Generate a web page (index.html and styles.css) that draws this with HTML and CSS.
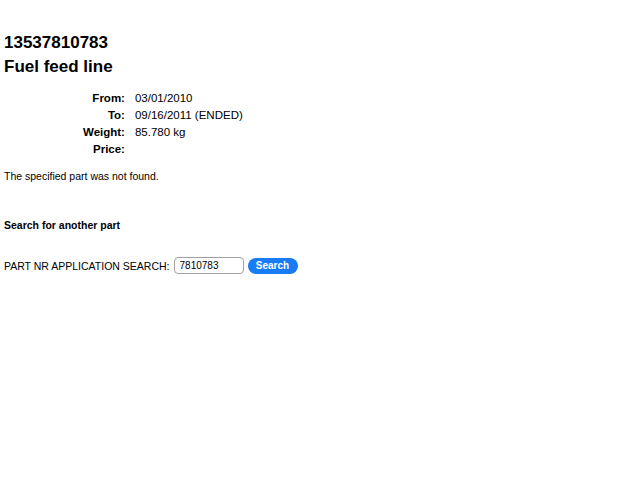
FILE: index.html
```html
<!DOCTYPE html>
<html lang="en">
<head>
    <meta charset="UTF-8">
    <meta name="viewport" content="width=device-width, initial-scale=1.0">
    <title>13537810783 - Fuel feed line</title>
    <link rel="stylesheet" href="styles.css">
</head>
<body>
    <div class="page">
        <h1 class="part-number">13537810783</h1>
        <h2 class="part-name">Fuel feed line</h2>

        <table class="details">
            <tr>
                <th>From:</th>
                <td>03/01/2010</td>
            </tr>
            <tr>
                <th>To:</th>
                <td>09/16/2011 (ENDED)</td>
            </tr>
            <tr>
                <th>Weight:</th>
                <td>85.780 kg</td>
            </tr>
            <tr>
                <th>Price:</th>
                <td></td>
            </tr>
        </table>

        <p class="not-found">The specified part was not found.</p>

        <h3 class="search-title">Search for another part</h3>

        <form class="search-form">
            <label for="partnr">PART NR APPLICATION SEARCH:</label>
            <input type="text" id="partnr" name="partnr" value="7810783">
            <button type="submit">Search</button>
        </form>
    </div>
</body>
</html>
```

FILE: styles.css
```css
body {
    font-family: "Liberation Sans", Arial, sans-serif;
    color: #000;
    background-color: #fff;
    margin: 0;
    padding: 0;
}

.page {
    padding: 33px 4px 0;
}

.part-number {
    font-size: 17px;
    font-weight: bold;
    margin: 0;
    line-height: 20px;
}

.part-name {
    font-size: 17px;
    font-weight: bold;
    margin: 4px 0 0;
    line-height: 20px;
}

.details {
    margin: 13px 0 0 79px;
    border-collapse: collapse;
    font-size: 11.5px;
}

.details th,
.details td {
    padding: 0;
    height: 17px;
    line-height: 17px;
}

.details th {
    text-align: right;
    font-weight: bold;
    padding-right: 10px;
}

.details td {
    text-align: left;
}

.not-found {
    font-size: 10.5px;
    line-height: 13px;
    margin: 12px 0 0;
}

.search-title {
    font-size: 10.5px;
    line-height: 13px;
    font-weight: bold;
    margin: 36px 0 0;
}

.search-form {
    margin-top: 25px;
    display: flex;
    align-items: center;
    font-size: 10.5px;
}

.search-form label {
    margin-right: 4px;
}

.search-form input {
    box-sizing: border-box;
    width: 70px;
    height: 17px;
    padding: 0 5px;
    border: 1px solid #a0a0a0;
    border-radius: 4px;
    font-family: "Liberation Sans", Arial, sans-serif;
    font-size: 10px;
    color: #000;
}

.search-form button {
    margin-left: 4px;
    width: 50px;
    height: 16px;
    padding: 0;
    background-color: #1a7cf5;
    color: #fff;
    border: none;
    border-radius: 8px;
    font-family: "Liberation Sans", Arial, sans-serif;
    font-size: 10px;
    font-weight: bold;
    cursor: pointer;
}
```
